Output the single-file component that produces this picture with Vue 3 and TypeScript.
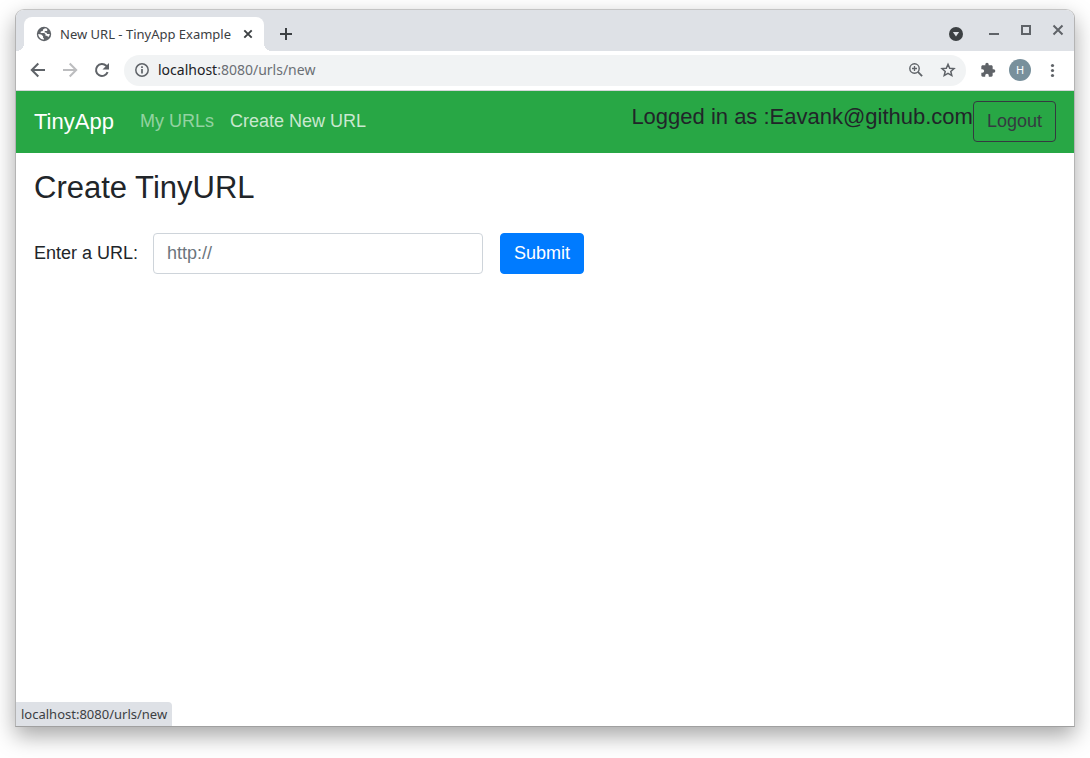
<script setup lang="ts">
import { ref } from 'vue'

interface NavLink {
  label: string
  href: string
  current: boolean
}

const address = 'localhost:8080/urls/new'
const host = address.split(':')[0]
const rest = address.slice(host.length)
const user = 'Eavank@github.com'
const longUrl = ref('')

const links: NavLink[] = [
  { label: 'My URLs', href: '#urls', current: false },
  { label: 'Create New URL', href: '#new', current: true },
]
</script>

<template>
  <div class="desktop">
    <div class="window">
      <header class="tabstrip">
        <div class="tab">
          <svg class="favicon" viewBox="0 0 16 16" width="16" height="16" aria-hidden="true">
            <circle cx="8" cy="8" r="7.200" fill="#5f6368" />
            <path
              d="M9 2.300 7 3.400 6.800 5 4.800 5.600 4.600 7h3.600l1.300 1.300v1.500h1.700l.9 1.200c1-.9 1.600-1.900 1.700-3.100h-2.600L10.200 6.600H8.600l.2-1.500h2.400V2.900A6 6 0 0 0 9 2.300ZM2.200 7.900c.1 2.700 2 5 4.900 5.700l.9-.1V12.200H7.100V10.300L5.300 8.500Z"
              fill="#fff"
            />
          </svg>
          <span class="tab-title">New URL - TinyApp Example</span>
          <button class="icon-button tab-close" type="button" aria-label="Close tab">
            <svg viewBox="0 0 16 16" width="16" height="16">
              <path d="M4.300 4.300l7.400 7.400M11.700 4.300l-7.400 7.400" stroke="#3c4043" stroke-width="1.900" />
            </svg>
          </button>
        </div>
        <button class="icon-button new-tab" type="button" aria-label="New tab">
          <svg viewBox="0 0 16 16" width="16" height="16">
            <path d="M8 2v12M2 8h12" stroke="#3c4043" stroke-width="2" />
          </svg>
        </button>
        <button class="icon-button tab-search" type="button" aria-label="Search tabs">
          <svg viewBox="0 0 16 16" width="16" height="16">
            <circle cx="8" cy="8" r="7" fill="#3c4043" />
            <path d="M4.900 6h6.200L8 10.500Z" fill="#dee1e6" />
          </svg>
        </button>
        <div class="window-controls">
          <button class="icon-button" type="button" aria-label="Minimize">
            <svg viewBox="0 0 16 16" width="16" height="16">
              <path d="M3 12h10" stroke="#5f6368" stroke-width="2" />
            </svg>
          </button>
          <button class="icon-button" type="button" aria-label="Maximize">
            <svg viewBox="0 0 16 16" width="16" height="16">
              <path d="M4 4h8v8H4Z" fill="none" stroke="#5f6368" stroke-width="2" />
            </svg>
          </button>
          <button class="icon-button" type="button" aria-label="Close">
            <svg viewBox="0 0 16 16" width="16" height="16">
              <path d="M3.500 3.500l9 9M12.500 3.500l-9 9" stroke="#5f6368" stroke-width="2" />
            </svg>
          </button>
        </div>
      </header>

      <div class="toolbar">
        <button class="icon-button" type="button" aria-label="Back">
          <svg viewBox="0 0 16 16" width="16" height="16">
            <path d="M15 8H2M8.300 1.500 1.800 8l6.500 6.500" fill="none" stroke="#5f6368" stroke-width="2" />
          </svg>
        </button>
        <button class="icon-button" type="button" aria-label="Forward">
          <svg viewBox="0 0 16 16" width="16" height="16">
            <path d="M1 8h13M7.700 1.500 14.200 8l-6.500 6.500" fill="none" stroke="#bcbdbf" stroke-width="2" />
          </svg>
        </button>
        <button class="icon-button" type="button" aria-label="Reload">
          <svg viewBox="0 0 16 16" width="16" height="16">
            <path d="M13.600 10.200A6 6 0 1 1 12.300 3.800L13.300 4.900" fill="none" stroke="#5f6368" stroke-width="2" />
            <path d="M15 1v6.500H8.500Z" fill="#5f6368" />
          </svg>
        </button>
        <div class="omnibox">
          <svg viewBox="0 0 16 16" width="16" height="16" aria-hidden="true">
            <circle cx="8" cy="8" r="6.200" fill="none" stroke="#5f6368" stroke-width="1.500" />
            <path d="M8 7v4.500M8 4.300v1.600" stroke="#5f6368" stroke-width="1.700" />
          </svg>
          <span class="address"><span class="host">{{ host }}</span>{{ rest }}</span>
          <button class="icon-button" type="button" aria-label="Zoom">
            <svg viewBox="0 0 16 16" width="16" height="16">
              <circle cx="6.500" cy="6.500" r="4.700" fill="none" stroke="#5f6368" stroke-width="1.400" />
              <path d="M9.900 9.900l4.200 4.200" stroke="#5f6368" stroke-width="1.800" />
              <path d="M6.500 4v5M4 6.500h5" stroke="#5f6368" stroke-width="1.300" />
            </svg>
          </button>
          <button class="icon-button" type="button" aria-label="Bookmark this page">
            <svg viewBox="0 0 16 16" width="16" height="16">
              <path
                d="M8 2.300 9.700 6.200l4.300.4-3.200 2.800 1 4.200L8 11.400l-3.800 2.200 1-4.200L2 6.600l4.300-.4Z"
                fill="none"
                stroke="#5f6368"
                stroke-width="1.500"
              />
            </svg>
          </button>
        </div>
        <button class="icon-button" type="button" aria-label="Extensions">
          <svg viewBox="0 0 24 24" width="16" height="16">
            <path
              d="M20.500 11H19V7c0-1.100-.9-2-2-2h-4V3.500a2.500 2.500 0 0 0-5 0V5H4c-1.100 0-2 .9-2 2v3.800h1.500a2.700 2.700 0 0 1 0 5.400H2V20c0 1.100.9 2 2 2h3.800v-1.500a2.700 2.700 0 0 1 5.400 0V22H17c1.100 0 2-.9 2-2v-4h1.500a2.500 2.500 0 0 0 0-5Z"
              fill="#5f6368"
            />
          </svg>
        </button>
        <button class="icon-button" type="button" aria-label="Profile">
          <span class="avatar">H</span>
        </button>
        <button class="icon-button" type="button" aria-label="Menu">
          <svg viewBox="0 0 16 16" width="16" height="16">
            <g fill="#5f6368">
              <circle cx="8.500" cy="3.500" r="1.600" />
              <circle cx="8.500" cy="8.500" r="1.600" />
              <circle cx="8.500" cy="13.500" r="1.600" />
            </g>
          </svg>
        </button>
      </div>

      <div class="page">
        <nav class="navbar">
          <a class="brand" href="#home">TinyApp</a>
          <a
            v-for="link in links"
            :key="link.href"
            class="nav-link"
            :class="{ current: link.current }"
            :href="link.href"
          >{{ link.label }}</a>
          <form class="session" @submit.prevent>
            <h5 class="user">Logged in as :{{ user }}</h5>
            <button class="logout" type="submit">Logout</button>
          </form>
        </nav>
        <main class="content">
          <h3 class="heading">Create TinyURL</h3>
          <form class="url-form" @submit.prevent>
            <label class="url-label" for="longURL">Enter a URL:</label>
            <input id="longURL" v-model="longUrl" class="url-input" type="text" placeholder="http://" />
            <button class="submit" type="submit">Submit</button>
          </form>
        </main>
        <div class="status">{{ address }}</div>
      </div>
    </div>
  </div>
</template>

<style>
body {
  margin: 0;
  background: #fff;
}
</style>

<style scoped>
.desktop,
.desktop * {
  box-sizing: border-box;
}

.desktop {
  display: flex;
  min-height: 100vh;
  padding: 9px 15px 31px;
  overflow: hidden;
  font-family: "Liberation Sans", Arial, sans-serif;
}

.window {
  flex: 1;
  display: flex;
  flex-direction: column;
  min-width: 0;
  border: 1px solid #b4b4b4;
  border-top-color: #c4c4c4;
  border-bottom-color: #a0a0a0;
  border-radius: 9px 9px 0 0;
  background: #fff;
  box-shadow: 0 9px 22px rgba(0, 0, 0, 0.35);
}

.icon-button {
  display: flex;
  flex: none;
  align-items: center;
  justify-content: center;
  width: 32px;
  height: 32px;
  padding: 0;
  border: 0;
  background: none;
}

svg {
  display: block;
  flex: none;
}

.tabstrip {
  display: flex;
  height: 41px;
  padding: 7px 0 0 8px;
  border-radius: 8px 8px 0 0;
  background: #dee1e6;
  font-family: "Noto Sans", sans-serif;
}

.tab {
  position: relative;
  display: flex;
  align-items: center;
  width: 240px;
  padding: 0 8px 0 12px;
  border-radius: 8px 8px 0 0;
  background: #fff;
}

.tab::before,
.tab::after {
  content: "";
  position: absolute;
  bottom: 0;
  width: 8px;
  height: 8px;
}

.tab::before {
  right: 100%;
  background: radial-gradient(circle at 0 0, transparent 8px, #fff 8px);
}

.tab::after {
  left: 100%;
  background: radial-gradient(circle at 100% 0, transparent 8px, #fff 8px);
}

.tab-title {
  flex: 1;
  padding-left: 8px;
  color: #3c4043;
  font-size: 13px;
  white-space: nowrap;
}

.tab-close {
  width: 16px;
}

.new-tab,
.tab-search {
  height: 34px;
}

.new-tab {
  margin-left: 6px;
}

.tab-search {
  margin-left: auto;
}

.window-controls {
  display: flex;
  height: 26px;
  align-items: center;
  padding: 0 0 0 6px;
}

.toolbar {
  display: flex;
  align-items: center;
  height: 40px;
  padding: 0 6px 1px;
  border-bottom: 1px solid #d5d7da;
  background: #fff;
  font-family: "Noto Sans", sans-serif;
}

.omnibox {
  flex: 1;
  display: flex;
  align-items: center;
  height: 31px;
  margin: 0 6px;
  padding: 0 2px 0 10px;
  border-radius: 16px;
  background: #f1f3f4;
}

.address {
  flex: 1;
  padding-left: 8px;
  color: #6b6f74;
  font-size: 14px;
  line-height: 18px;
}

.host {
  color: #202124;
}

.avatar {
  width: 22px;
  height: 22px;
  border-radius: 50%;
  background: #78909c;
  color: #fff;
  font: 11px/22px "Noto Sans", sans-serif;
}

.page {
  position: relative;
  flex: 1;
  color: #212529;
  font-size: 18px;
}

.navbar {
  display: flex;
  align-items: center;
  padding: 10px 18px 11px;
  background: #28a745;
}

.brand {
  margin-right: 26px;
  color: #fff;
  font-size: 22px;
  text-decoration: none;
}

.nav-link {
  margin-right: 16px;
  color: rgba(255, 255, 255, 0.5);
  text-decoration: none;
  white-space: nowrap;
}

.nav-link.current {
  color: rgba(255, 255, 255, 0.75);
}

.session {
  display: flex;
  align-items: center;
  margin-left: auto;
}

.user {
  margin: 0 0 9px;
  font-size: 22px;
  font-weight: 400;
  line-height: 26px;
  white-space: nowrap;
}

.logout,
.submit {
  height: 41px;
  padding: 0 13px;
  border: 1px solid #343a40;
  border-radius: 4px;
  background: none;
  color: #343a40;
  font: 18px/27px "Liberation Sans", Arial, sans-serif;
}

.content {
  padding: 16px 18px;
}

.heading {
  margin: 0 0 26px;
  font-size: 31px;
  font-weight: 400;
  line-height: 38px;
}

.url-form {
  display: flex;
  align-items: center;
}

.url-label {
  margin-right: 15px;
}

.url-input {
  width: 330px;
  height: 41px;
  margin-right: 17px;
  padding: 0 13px;
  border: 1px solid #ced4da;
  border-radius: 4px;
  background: #fff;
  color: #495057;
  font: 18px/27px "Liberation Sans", Arial, sans-serif;
}

.url-input::placeholder {
  color: #6c757d;
  opacity: 1;
}

.submit {
  border-color: #007bff;
  background: #007bff;
  color: #fff;
}

.status {
  position: absolute;
  bottom: 0;
  left: 0;
  padding: 0 5px;
  border-radius: 0 4px 0 0;
  background: #dee1e6;
  color: #3c4043;
  font: 13px/24px "Noto Sans", sans-serif;
}
</style>
